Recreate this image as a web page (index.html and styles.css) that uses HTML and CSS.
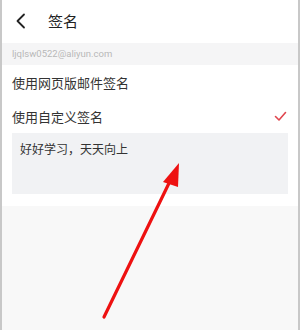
FILE: index.html
```html
<!DOCTYPE html>
<html>
<head>
    <title>签名</title>
    <link rel="stylesheet" href="styles.css">
</head>
<body>
    <div class="page">
        <div class="header">
            <svg class="back" width="12" height="16" viewBox="0 0 12 16">
                <path d="M9 1.5 L2.5 8 L9 14.5" fill="none" stroke="#222" stroke-width="1.8" stroke-linecap="round" stroke-linejoin="round"/>
            </svg>
            <span class="title">签名</span>
        </div>
        <div class="account">ljqlsw0522@aliyun.com</div>
        <div class="panel">
            <div class="row">使用网页版邮件签名</div>
            <div class="row">
                <span>使用自定义签名</span>
                <svg class="check" width="13" height="11" viewBox="0 0 13 11">
                    <path d="M1.5 5.5 L5 9 L11.5 1.5" fill="none" stroke="#e0464e" stroke-width="1.6" stroke-linecap="round" stroke-linejoin="round"/>
                </svg>
            </div>
            <div class="editor">好好学习，天天向上</div>
        </div>
    </div>

    <!-- annotation arrow -->
    <svg class="arrow" width="300" height="330" viewBox="0 0 300 330">
        <line x1="104" y1="317" x2="172" y2="177" stroke="#ee1111" stroke-width="3.2" stroke-linecap="round"/>
        <polygon points="179,163 163,182 178,187" fill="#ee1111"/>
    </svg>
</body>
</html>
```

FILE: styles.css
```css
body {
    margin: 0;
    padding: 0;
    font-family: "Noto Sans CJK SC", "Noto Sans", sans-serif;
    background-color: #f8f8f8;
}
.page {
    width: 296px;
    height: 330px;
    border-left: 2px solid #c8c8c8;
    border-right: 2px solid #c8c8c8;
    background-color: #f8f8f8;
}
.header {
    height: 43px;
    display: flex;
    align-items: center;
    background-color: #fff;
}
.back {
    margin-left: 13px;
    margin-top: -1px;
}
.title {
    margin-left: 21px;
    margin-top: -3px;
    font-size: 15px;
    color: #222;
}
.account {
    height: 22px;
    line-height: 22px;
    padding-left: 10px;
    font-family: Roboto, "Liberation Sans", sans-serif;
    font-size: 9.5px;
    color: #b8b8b8;
    background-color: #f5f5f6;
}
.panel {
    background-color: #fff;
    padding-bottom: 12px;
}
.row {
    height: 34px;
    display: flex;
    align-items: center;
    justify-content: space-between;
    padding: 0 11px 0 10px;
    font-size: 13px;
    color: #333;
}
.editor {
    margin: 0 10px;
    height: 46px;
    padding: 7px 8px 8px;
    background-color: #f1f2f4;
    font-size: 12px;
    color: #333;
}
.arrow {
    position: absolute;
    top: 0;
    left: 0;
}
```
